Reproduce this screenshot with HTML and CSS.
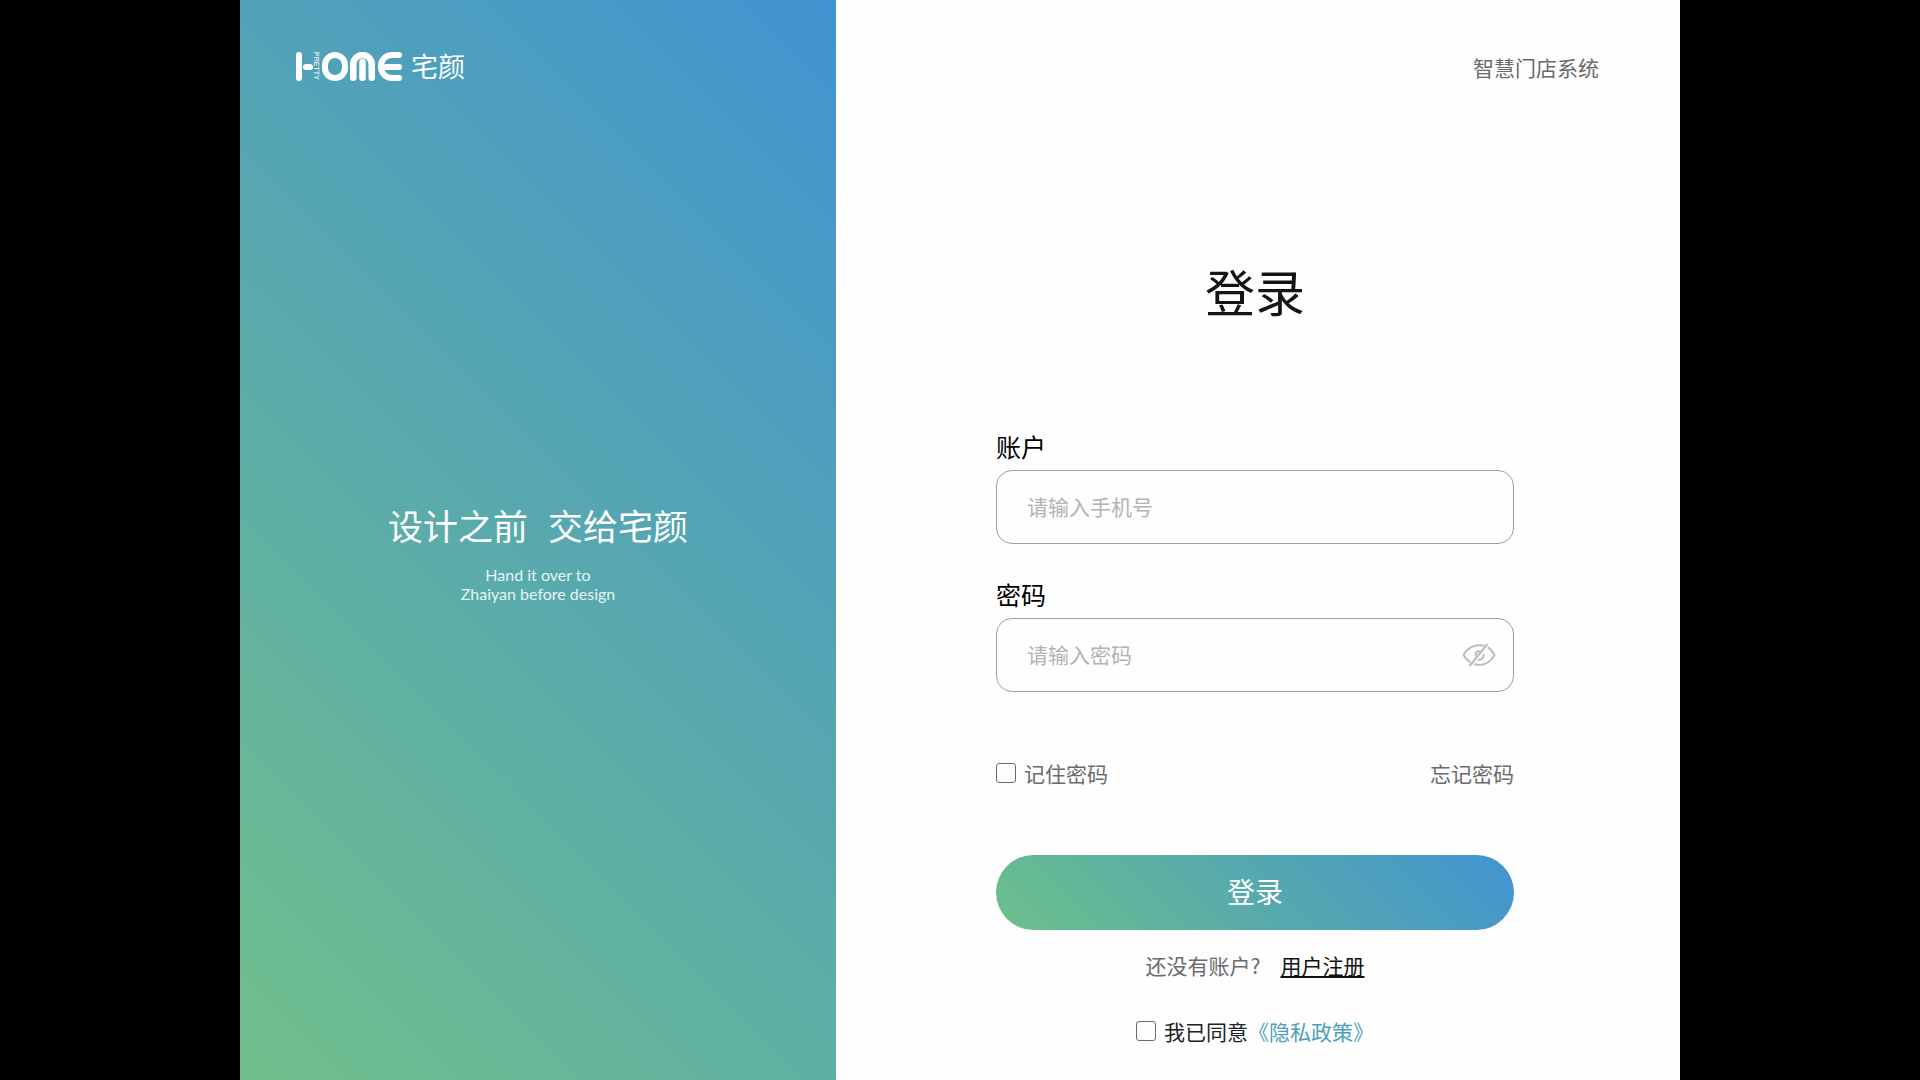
FILE: index.html
```html
<!DOCTYPE html>
<html lang="zh-CN">
<head>
<meta charset="utf-8">
<meta name="viewport" content="width=device-width, initial-scale=1">
<title>登录 - 智慧门店系统</title>
<link rel="stylesheet" href="styles.css">
</head>
<body>
<div class="shell">
  <aside class="brand">
    <div class="logo">
      <svg class="logo-mark" width="106" height="29" viewBox="0 0 106 29" role="img" aria-label="Pretty Home">
        <g fill="#fff">
          <rect x="0" y="0" width="6" height="29" rx="3"/>
          <rect x="7" y="12" width="10" height="6" rx="3"/>
          <rect x="87" y="12" width="19" height="6" rx="3"/>
          <rect x="94" y="0" width="12" height="6" rx="3"/>
          <rect x="94" y="23" width="12" height="6" rx="3"/>
          <rect x="54" y="12" width="6.500" height="17" rx="3"/>
          <rect x="63.250" y="7" width="6.500" height="22" rx="3"/>
          <rect x="72.500" y="12" width="6.500" height="17" rx="3"/>
        </g>
        <g fill="none" stroke="#fff" stroke-width="6">
          <rect x="29" y="3" width="20" height="23" rx="10"/>
          <svg x="54" y="0" width="25" height="16"><rect x="3.250" y="3" width="18.500" height="40" rx="9.250" stroke-width="6.500"/></svg>
          <svg x="82" y="0" width="17" height="29"><rect x="3" y="3" width="40" height="23" rx="11"/></svg>
        </g>
        <text class="logo-side" transform="translate(18 0) rotate(90)" x="0" y="0">PRETTY</text>
      </svg>
      <span class="logo-name">宅颜</span>
    </div>
    <div class="pitch">
      <p class="slogan"><span>设计之前</span><span>交给宅颜</span></p>
      <p class="tagline">Hand it over to<br>Zhaiyan before design</p>
    </div>
  </aside>

  <main class="panel">
    <header class="system">智慧门店系统</header>
    <form class="login">
      <h1 class="title">登录</h1>
      <div class="field">
        <label class="label" for="account">账户</label>
        <input class="input" id="account" type="tel" placeholder="请输入手机号">
      </div>
      <div class="field">
        <label class="label" for="password">密码</label>
        <div class="password">
          <input class="input" id="password" type="password" placeholder="请输入密码">
          <button class="reveal" type="button" aria-label="显示密码">
            <svg width="34" height="24" viewBox="0 0 34 24" fill="none" stroke="#bdbdbd" stroke-width="2" stroke-linecap="round">
              <path d="M21.500 2.600C13 .8 5.500 4.500 1.500 12c1.800 3.200 3.800 5.300 6.200 6.900"/>
              <path d="M26.500 4.600c2.400 1.700 4.400 4.200 6 7.400-4.500 8-12 11.300-20 9.200"/>
              <path d="M25 1.500 8 22.500"/>
              <path d="M13.500 12.500c0-2.600 1.500-4.200 4-4.200M21.500 12c.5 3-1.800 5-5 4.800"/>
            </svg>
          </button>
        </div>
      </div>
      <div class="options">
        <label class="check"><input class="box" type="checkbox">记住密码</label>
        <a class="forgot" href="#forgot">忘记密码</a>
      </div>
      <button class="submit" type="submit">登录</button>
      <p class="register"><span>还没有账户?</span><a class="register-link" href="#register">用户注册</a></p>
      <div class="agree">
        <label class="check"><input class="box" type="checkbox">我已同意</label><a class="policy" href="#privacy">《隐私政策》</a>
      </div>
    </form>
  </main>
</div>
</body>
</html>
```
FILE: styles.css
```css
* { box-sizing: border-box; }

body {
  margin: 0;
  background: #000;
  font-family: "Noto Sans CJK SC", sans-serif;
  font-size: 21px;
  line-height: 30px;
  color: #6b6b6b;
}

h1, p { margin: 0; font-weight: 400; }

a { color: inherit; text-decoration: none; }

button, input { font: inherit; }

.shell {
  display: grid;
  grid-template-columns: 596fr 844fr;
  width: 75%;
  min-height: 100vh;
  margin: 0 auto;
}

.brand {
  display: flex;
  flex-direction: column;
  padding: 50px 56px 57px;
  color: #fff;
  background: linear-gradient(45deg, #70c08b, #57a8af 52%, #4193d1);
}

.logo {
  display: flex;
  align-items: center;
  gap: 9px;
  height: 32px;
}

.logo-side {
  font-family: "Liberation Sans", sans-serif;
  font-size: 7px;
  fill: #fff;
}

.logo-name { font-size: 27px; }

.pitch {
  flex: 1;
  display: flex;
  flex-direction: column;
  justify-content: center;
  gap: 18px;
  text-align: center;
}

.slogan {
  display: flex;
  justify-content: center;
  gap: 20px;
  font-size: 35px;
  line-height: 44px;
}

.tagline {
  font-family: Lato, sans-serif;
  font-size: 16px;
  line-height: 19px;
  color: #e4f4f4;
}

.panel {
  padding: 52px 81px 32px 75px;
  background: #fefefe;
}

.system { text-align: right; }

.login {
  max-width: 518px;
  margin: 172px auto 0;
}

.title {
  margin-bottom: 102px;
  font-size: 50px;
  line-height: 72px;
  color: #151515;
  text-align: center;
}

.field { margin-bottom: 32px; }

.label {
  display: block;
  margin-bottom: 6px;
  font-size: 25px;
  line-height: 36px;
  color: #000;
}

.input {
  display: block;
  width: 100%;
  height: 74px;
  padding: 0 30px 3px;
  border: 1px solid #a0a0a0;
  border-radius: 16px;
  background: transparent;
  color: #222;
}

.input::placeholder { color: #b3b3b3; opacity: 1; }

.password { position: relative; }

.password .input { padding-right: 64px; }

.reveal {
  position: absolute;
  top: 0;
  bottom: 0;
  right: 18px;
  display: flex;
  align-items: center;
  padding: 0;
  border: 0;
  background: none;
}

.options {
  display: flex;
  justify-content: space-between;
  margin-top: 66px;
}

.check {
  display: flex;
  align-items: center;
  gap: 8px;
}

.box {
  appearance: none;
  width: 20px;
  height: 20px;
  margin: 0;
  border: 1px solid #6b6b6b;
  border-radius: 3px;
}

.box:checked { background: #4d9fb9; }

.submit {
  display: block;
  width: 100%;
  height: 75px;
  margin-top: 67px;
  padding: 0 0 3px;
  border: 0;
  border-radius: 38px;
  font-size: 28px;
  color: #fff;
  background: linear-gradient(45deg, #6cc089, #4193d1);
}

.register {
  display: flex;
  justify-content: center;
  gap: 20px;
  margin-top: 20px;
}

.register-link {
  color: #111;
  text-decoration: underline;
}

.agree {
  display: flex;
  justify-content: center;
  margin-top: 36px;
  color: #222;
}

.policy { color: #4d9fb9; }
```
